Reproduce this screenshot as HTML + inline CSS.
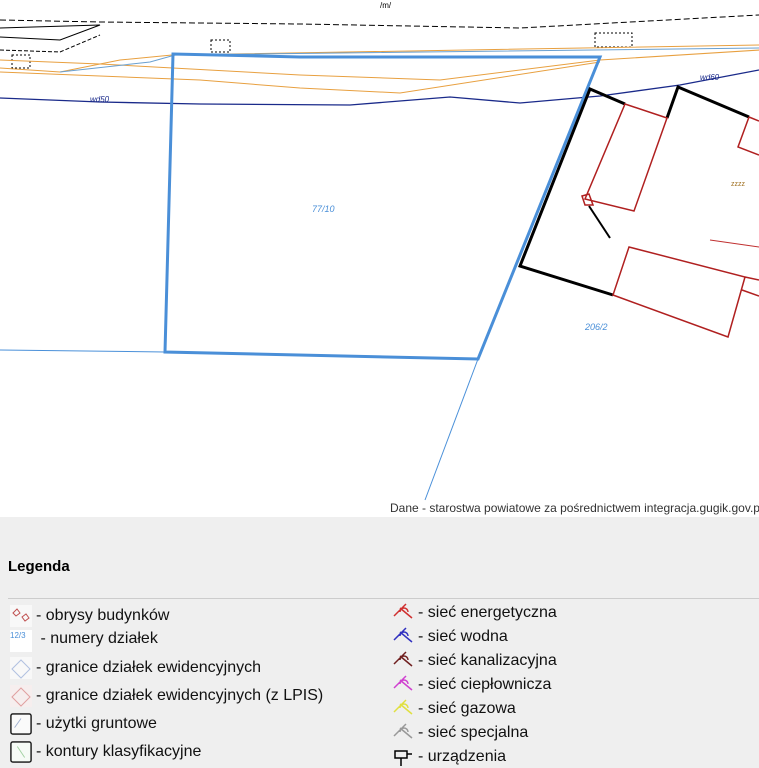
<!DOCTYPE html>
<html><head><meta charset="utf-8"><style>
body{margin:0;width:759px;height:766px;overflow:hidden;background:#efefef;font-family:"Liberation Sans",Arial,sans-serif;}
#map{position:absolute;left:0;top:0;width:759px;height:517px;background:#fff;}
.attr{position:absolute;left:390px;top:501px;font-size:12px;color:#333;white-space:nowrap;}
h3{position:absolute;left:8px;top:558px;margin:0;font-size:15px;font-weight:bold;color:#000;}
.sep{position:absolute;left:8px;right:0;top:598px;border-top:1px solid #ccc;}
.item{position:absolute;font-size:16px;color:#111;white-space:nowrap;}
.ic{display:inline-block;width:22px;height:22px;vertical-align:middle;margin-right:4px;}
</style></head><body>
<div id="map">
<svg width="759" height="517" viewBox="0 0 759 517">
<g fill="none">
<path d="M0 20 L100 22 L300 24 L520 28 L759 15" stroke="#000" stroke-dasharray="6,3"/>
<path d="M0 37 L60 40 L100 25 L0 28" stroke="#000"/>
<path d="M0 50 L60 52 L100 35" stroke="#000" stroke-dasharray="4,2"/>
<rect x="12" y="55" width="18" height="13" stroke="#000" stroke-dasharray="2,2"/>
<rect x="211" y="40" width="19" height="12" stroke="#000" stroke-dasharray="2,2"/>
<rect x="595" y="33" width="37" height="14" stroke="#000" stroke-dasharray="2,2"/>
<path d="M0 68 L60 72 L120 60 L172 55 L760 45" stroke="#e8a040"/>
<path d="M0 60 L100 64 L300 75 L440 80 L600 60 L760 50" stroke="#e8a040"/>
<path d="M0 72 L200 80 L300 88 L400 93 L600 62" stroke="#e8a040"/>
<path d="M60 72 L150 62 L175 55 L759 48" stroke="#6aa0d0"/>
<path d="M0 98 L100 102 L200 104 L350 105 L450 97 L520 103 L600 96 L680 85 L759 70" stroke="#1a2a8a" stroke-width="1.3"/>
<text x="90" y="102" font-size="8" fill="#1a2a8a" font-style="italic">wd50</text>
<text x="700" y="80" font-size="8" fill="#1a2a8a" font-style="italic">wd60</text>
<text x="380" y="8" font-size="8" fill="#000">/m/</text>
<path d="M0 350 L165 352" stroke="#4a90d9"/>
<path d="M478 359 L425 500" stroke="#4a90d9"/>
<path d="M173 54 L300 57 L600 57 L478 359 L165 352 Z" stroke="#4a8fd8" stroke-width="3"/>
<text x="312" y="212" font-size="9" fill="#4a8fd8" font-style="italic">77/10</text>
<text x="585" y="330" font-size="9" fill="#4a8fd8" font-style="italic">206/2</text>
<path d="M625 104 L590 89 L520 266 L613 295" stroke="#000" stroke-width="3"/>
<path d="M667 118 L678 87 L749 117" stroke="#000" stroke-width="3"/>
<path d="M589 206 L610 238" stroke="#000" stroke-width="2"/>
<path d="M625 104 L667 118 L634 211 L585 199 Z M582 196 L589 194 L593 205 L585 205Z" stroke="#b02020" stroke-width="1.5"/>
<path d="M629 247 L745 277 L728 337 L613 295 Z M745 277 L759 280 M742 290 L759 296" stroke="#b02020" stroke-width="1.5"/>
<path d="M749 117 L759 121 M749 117 L738 147 L759 155" stroke="#b02020" stroke-width="1.5"/>
<path d="M710 240 L759 247" stroke="#c03030"/>
<text x="731" y="186" font-size="7" fill="#a07020">zzzz</text>
</g>
</svg>
<div class="attr">Dane - starostwa powiatowe za pośrednictwem integracja.gugik.gov.pl</div>
</div>
<h3>Legenda</h3>
<div class="sep"></div>
<div class="item" style="left:10px;top:605px"><svg class="ic" viewBox="0 0 22 22"><rect width="22" height="22" fill="#f8f8f8"/><path d="M3 8 L7 4 L10 8 L6 11Z M12 12 L16 9 L19 13 L15 16Z" fill="none" stroke="#c05050"/></svg>- obrysy budynków</div>
<div class="item" style="left:10px;top:630px"><span class="ic" style="font-size:8px;color:#4a8fd8;background:#fff;vertical-align:top;line-height:12px">12/3</span> - numery działek</div>
<div class="item" style="left:10px;top:657px"><svg class="ic" viewBox="0 0 22 22"><rect width="22" height="22" fill="#f8f8f8"/><path d="M2 12 L11 3 L20 12 L11 21Z" fill="none" stroke="#b0c0e0"/></svg>- granice działek ewidencyjnych</div>
<div class="item" style="left:10px;top:685px"><svg class="ic" viewBox="0 0 22 22"><rect width="22" height="22" fill="#f6eeee"/><path d="M2 12 L11 3 L20 12 L11 21Z" fill="none" stroke="#e0a0a0"/></svg>- granice działek ewidencyjnych (z LPIS)</div>
<div class="item" style="left:10px;top:713px"><svg class="ic" viewBox="0 0 24 24"><rect x="1" y="1" width="22" height="22" rx="2" fill="#fafafa" stroke="#111" stroke-width="1.5"/><path d="M5 16 L12 6" stroke="#a0b0d0"/></svg>- użytki gruntowe</div>
<div class="item" style="left:10px;top:741px"><svg class="ic" viewBox="0 0 24 24"><rect x="1" y="1" width="22" height="22" rx="2" fill="#f6fbf6" stroke="#111" stroke-width="1.5"/><path d="M8 6 L16 18" stroke="#a0d0a0"/></svg>- kontury klasyfikacyjne</div>
<div class="item" style="left:392px;top:602px"><svg class="ic" viewBox="0 0 22 22"><path d="M2 14 L14 2 M8 6 L20 16 M8 10 a4 4 0 1 1 8 0" fill="none" stroke="#d03030" stroke-width="1.5"/></svg>- sieć energetyczna</div>
<div class="item" style="left:392px;top:626px"><svg class="ic" viewBox="0 0 22 22"><path d="M2 14 L14 2 M8 6 L20 16 M8 10 a4 4 0 1 1 8 0" fill="none" stroke="#3030c0" stroke-width="1.5"/></svg>- sieć wodna</div>
<div class="item" style="left:392px;top:650px"><svg class="ic" viewBox="0 0 22 22"><path d="M2 14 L14 2 M8 6 L20 16 M8 10 a4 4 0 1 1 8 0" fill="none" stroke="#702020" stroke-width="1.5"/></svg>- sieć kanalizacyjna</div>
<div class="item" style="left:392px;top:674px"><svg class="ic" viewBox="0 0 22 22"><path d="M2 14 L14 2 M8 6 L20 16 M8 10 a4 4 0 1 1 8 0" fill="none" stroke="#d040d0" stroke-width="1.5"/></svg>- sieć ciepłownicza</div>
<div class="item" style="left:392px;top:698px"><svg class="ic" viewBox="0 0 22 22"><path d="M2 14 L14 2 M8 6 L20 16 M8 10 a4 4 0 1 1 8 0" fill="none" stroke="#e0e040" stroke-width="1.5"/></svg>- sieć gazowa</div>
<div class="item" style="left:392px;top:722px"><svg class="ic" viewBox="0 0 22 22"><path d="M2 14 L14 2 M8 6 L20 16 M8 10 a4 4 0 1 1 8 0" fill="none" stroke="#999" stroke-width="1.5"/></svg>- sieć specjalna</div>
<div class="item" style="left:392px;top:746px"><svg class="ic" viewBox="0 0 22 22"><path d="M3 5 H15 V12 H3Z M9 12 V20 M15 8 H20" fill="none" stroke="#000" stroke-width="1.5"/></svg>- urządzenia</div>
</body></html>
